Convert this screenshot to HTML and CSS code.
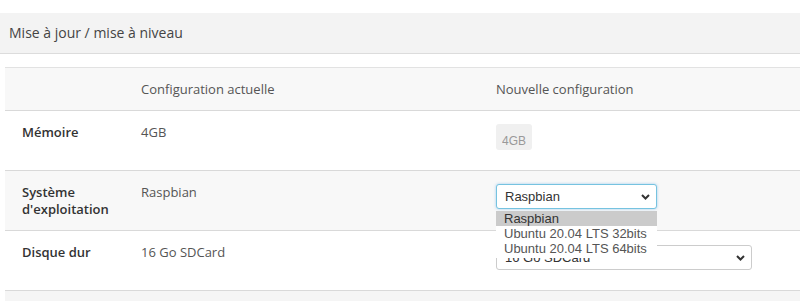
FILE: index.html
```html
<!DOCTYPE html>
<html lang="fr">
<head>
  <meta charset="UTF-8"/>
  <title>Mise à jour / mise à niveau</title>
  <meta name="viewport" content="width=device-width, initial-scale=1.0"/>
  <link rel="stylesheet" href="styles.css">
</head>
<body>
  <div class="panel">
    <div class="panel-heading">Mise à jour / mise à niveau</div>

    <div class="panel-body">
      <table class="config">
        <thead>
          <tr>
            <th></th>
            <th>Configuration actuelle</th>
            <th>Nouvelle configuration</th>
          </tr>
        </thead>
        <tbody>
          <tr>
            <td class="label">Mémoire</td>
            <td>4GB</td>
            <td><input class="ram" type="text" value="4GB" disabled></td>
          </tr>
          <tr class="odd">
            <td class="label">Système<br>d'exploitation</td>
            <td>Raspbian</td>
            <td>
              <div class="select-wrap os">
                <select class="field focused">
                  <option>Raspbian</option>
                  <option>Ubuntu 20.04 LTS 32bits</option>
                  <option>Ubuntu 20.04 LTS 64bits</option>
                </select>
                <svg class="chevron" width="9" height="6" viewBox="0 0 9 6"><path d="M1 1l3.5 3.5L8 1" fill="none" stroke="#333" stroke-width="2"/></svg>
                <!-- liste ouverte du select -->
                <ul class="dropdown">
                  <li class="active">Raspbian</li>
                  <li>Ubuntu 20.04 LTS 32bits</li>
                  <li>Ubuntu 20.04 LTS 64bits</li>
                </ul>
              </div>
            </td>
          </tr>
          <tr>
            <td class="label">Disque dur</td>
            <td>16 Go SDCard</td>
            <td>
              <div class="select-wrap disk">
                <select class="field">
                  <option>16 Go SDCard</option>
                </select>
                <svg class="chevron" width="9" height="6" viewBox="0 0 9 6"><path d="M1 1l3.5 3.5L8 1" fill="none" stroke="#333" stroke-width="2"/></svg>
              </div>
            </td>
          </tr>
        </tbody>
      </table>
    </div>
    <div class="panel-footer"></div>
  </div>
</body>
</html>
```

FILE: styles.css
```css
body {
  margin: 0;
  font-family: "Open Sans", "Noto Sans", sans-serif;
  font-size: 13px;
  color: #555;
  background: #fff;
}
.panel {
  padding-top: 13px;
}
.panel-heading {
  height: 40px;
  line-height: 40px;
  padding: 0 9px;
  font-size: 14px;
  font-weight: 500;
  color: #444;
  background-color: #f3f3f3;
  border-bottom: 1px solid #dcdcdc;
}
.panel-body {
  padding: 13px 0 0 5px;
}
.config {
  width: 100%;
  table-layout: fixed;
  border-collapse: collapse;
  border-top: 1px solid #e2e2e2;
}
.config th,
.config td {
  text-align: left;
  vertical-align: top;
  padding: 13px 17px 12px;
  line-height: 17px;
  font-weight: normal;
  border-bottom: 1px solid #d9d9d9;
}
.config th:first-child,
.config td:first-child {
  width: 85px;
  white-space: nowrap;
}
.config th:nth-child(2),
.config td:nth-child(2) {
  width: 321px;
}
.config thead tr,
.config tr.odd {
  background-color: #f8f8f8;
}
.config td.label {
  font-weight: 600;
  color: #333;
}
.ram {
  display: block;
  width: 36px;
  height: 26px;
  box-sizing: border-box;
  margin: 0 0 8px;
  padding: 8px 0 0 6px;
  border: none;
  border-radius: 3px;
  background-color: #f0f0f0;
  font-family: "Liberation Sans", Arial, sans-serif;
  font-size: 12px;
  color: #999;
}
.select-wrap {
  position: relative;
  margin-bottom: 8px;
}
.select-wrap.os {
  width: 161px;
}
.select-wrap.disk {
  width: 256px;
  margin-top: 1px;
}
.field {
  display: block;
  width: 100%;
  height: 25px;
  box-sizing: border-box;
  padding: 0 8px;
  appearance: none;
  -webkit-appearance: none;
  background: #fff;
  border: 1px solid #ccc;
  border-radius: 3px;
  font-family: "Liberation Sans", Arial, sans-serif;
  font-size: 13px;
  color: #333;
}
.field.focused {
  border-color: #76c3e0;
  box-shadow: 0 0 3px rgba(102, 175, 233, 0.6);
}
.chevron {
  position: absolute;
  right: 7px;
  top: 10px;
  pointer-events: none;
}
.dropdown {
  position: absolute;
  left: 0;
  top: 27px;
  width: 161px;
  margin: 0;
  padding: 0 0 2px;
  list-style: none;
  background: #fff;
  font-family: "Liberation Sans", Arial, sans-serif;
  font-size: 13px;
  color: #555;
  z-index: 2;
}
.dropdown li {
  height: 15px;
  line-height: 15px;
  padding: 0 8px;
}
.dropdown li.active {
  background-color: #cbcbcb;
  color: #333;
}
.panel-footer {
  height: 20px;
  margin-left: 5px;
  background-color: #f5f5f5;
}
```
